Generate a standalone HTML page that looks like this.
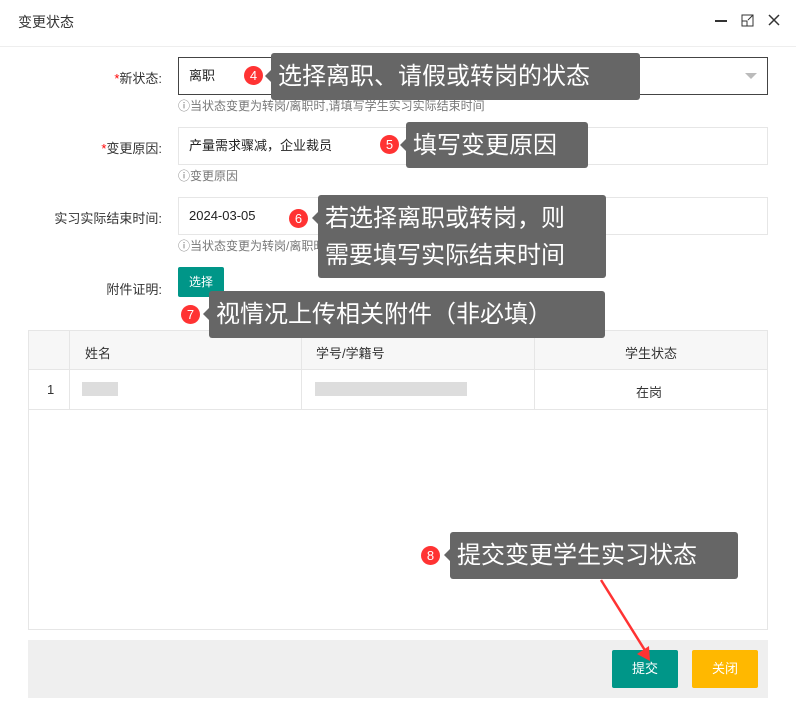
<!DOCTYPE html>
<html><head><meta charset="utf-8"><style>
*{box-sizing:border-box;margin:0;padding:0}
body{width:796px;height:725px;background:#fff;font-family:"Liberation Sans","Noto Sans CJK SC",sans-serif;color:#333;position:relative;overflow:hidden;font-size:13px}
.a{position:absolute}
.title{left:18px;top:12px;font-size:14px}
.hl{left:0;top:46px;width:796px;height:1px;background:#eee}
.lab{width:140px;left:22px;text-align:right;font-size:13px;color:#333}
.lab b{color:#f00;font-weight:normal}
.inp{left:178px;width:590px;height:38px;border:1px solid #e6e6e6;padding-left:10px;line-height:36px;font-size:13px;color:#222}
.hint{left:178px;font-size:12px;color:#777}
.btn{color:#fff;text-align:center;border-radius:2px}
.tip{background:#666;color:#fff;border-radius:3px;font-size:24px;padding-left:7px;line-height:47px}
.tip:before{content:"";position:absolute;left:-6px;top:17px;border:6px solid transparent;border-left:0;border-right-color:#666}
.bd{width:19px;height:19px;border-radius:50%;background:#f33;color:#fff;font-size:13px;text-align:center;line-height:19px}
.tb{left:28px;top:330px;width:740px;height:300px;border:1px solid #e6e6e6}
.blur{background:#ddd;height:14px}
</style></head><body>
<div class="a title">变更状态</div>
<svg class="a" style="left:700px;top:10px" width="90" height="22">
<line x1="15" y1="11" x2="27" y2="11" stroke="#333" stroke-width="2"/>
<rect x="42" y="5" width="11" height="11" fill="none" stroke="#333" stroke-width="1"/>
<rect x="42" y="11" width="5" height="5" fill="none" stroke="#333" stroke-width="1"/>
<path d="M48 10 L53 5 M50 5 H53 V8" stroke="#333" fill="none"/>
<path d="M69 5 L79 15 M79 5 L69 15" stroke="#333" stroke-width="1.5"/>
</svg>
<div class="a hl"></div>

<div class="a lab" style="top:68px"><b>*</b>新状态:</div>
<div class="a inp" style="top:57px;border-color:#444">离职</div>
<div class="a" style="left:745px;top:73px;border:6px solid transparent;border-top:6px solid #bbb;border-bottom:0"></div>
<div class="a hint" style="top:97px">ⓘ当状态变更为转岗/离职时,请填写学生实习实际结束时间</div>

<div class="a lab" style="top:138px"><b>*</b>变更原因:</div>
<div class="a inp" style="top:127px">产量需求骤减，企业裁员</div>
<div class="a hint" style="top:167px">ⓘ变更原因</div>

<div class="a lab" style="top:208px">实习实际结束时间:</div>
<div class="a inp" style="top:197px">2024-03-05</div>
<div class="a hint" style="top:237px">ⓘ当状态变更为转岗/离职时,请填写学生实际结束时间</div>

<div class="a lab" style="top:279px">附件证明:</div>
<div class="a btn" style="left:178px;top:267px;width:46px;height:30px;line-height:30px;background:#009688;font-size:12px">选择</div>

<div class="a tb">
<div class="a" style="left:0;top:0;width:738px;height:39px;background:#f7f7f7;border-bottom:1px solid #e6e6e6"></div>
<div class="a" style="left:0;top:78px;width:738px;height:1px;background:#e6e6e6"></div>
<div class="a" style="left:40px;top:0;width:1px;height:78px;background:#e6e6e6"></div>
<div class="a" style="left:272px;top:0;width:1px;height:78px;background:#e6e6e6"></div>
<div class="a" style="left:505px;top:0;width:1px;height:78px;background:#e6e6e6"></div>
<div class="a" style="left:56px;top:12px">姓名</div>
<div class="a" style="left:287px;top:12px">学号/学籍号</div>
<div class="a" style="left:596px;top:12px">学生状态</div>
<div class="a" style="left:18px;top:51px">1</div>
<div class="a blur" style="left:53px;top:51px;width:36px"></div>
<div class="a blur" style="left:286px;top:51px;width:152px"></div>
<div class="a" style="left:607px;top:51px">在岗</div>
</div>

<div class="a" style="left:28px;top:640px;width:740px;height:58px;background:#efefef"></div>
<div class="a btn" style="left:612px;top:650px;width:66px;height:38px;line-height:38px;background:#009688">提交</div>
<div class="a btn" style="left:692px;top:650px;width:66px;height:38px;line-height:38px;background:#ffb800">关闭</div>

<div class="a bd" style="left:244px;top:66px">4</div>
<div class="a tip" style="left:271px;top:53px;width:369px;height:47px">选择离职、请假或转岗的状态</div>
<div class="a bd" style="left:380px;top:135px">5</div>
<div class="a tip" style="left:406px;top:122px;width:182px;height:46px">填写变更原因</div>
<div class="a bd" style="left:289px;top:209px">6</div>
<div class="a tip" style="left:318px;top:195px;width:288px;height:83px;line-height:37px;padding-top:5px">若选择离职或转岗，则<br>需要填写实际结束时间</div>
<div class="a bd" style="left:181px;top:305px">7</div>
<div class="a tip" style="left:209px;top:291px;width:396px;height:47px">视情况上传相关附件（非必填）</div>
<div class="a bd" style="left:421px;top:546px">8</div>
<div class="a tip" style="left:450px;top:532px;width:288px;height:47px">提交变更学生实习状态</div>
<svg class="a" style="left:0;top:0" width="796" height="725">
<path d="M601 580 L646 652" stroke="#f33" stroke-width="2.5"/>
<path d="M637 654 L650 661 L649 646 Z" fill="#f33"/>
</svg>
</body></html>
